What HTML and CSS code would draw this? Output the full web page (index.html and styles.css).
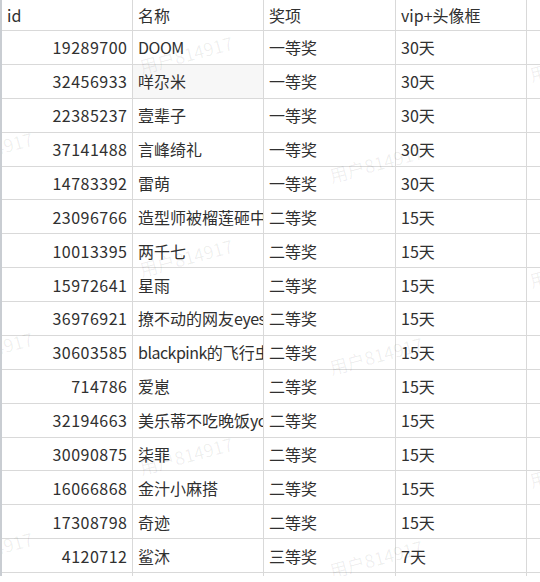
FILE: index.html
```html
<!DOCTYPE html>
<html lang="zh">
<head>
<meta charset="utf-8">
<title>sheet</title>
<link rel="stylesheet" href="styles.css">
</head>
<body>
<div class="sheet">
  <div class="row head">
    <div class="c l">id</div><div class="c l">名称</div><div class="c l">奖项</div><div class="c l">vip+头像框</div><div class="c"></div>
  </div>
  <div class="row"><div class="c r">19289700</div><div class="c l"><span class="lat">DOOM</span></div><div class="c l">一等奖</div><div class="c l">30天</div><div class="c"></div></div>
  <div class="row"><div class="c r">32456933</div><div class="c l sel">咩尕米</div><div class="c l">一等奖</div><div class="c l">30天</div><div class="c"></div></div>
  <div class="row"><div class="c r">22385237</div><div class="c l">壹辈子</div><div class="c l">一等奖</div><div class="c l">30天</div><div class="c"></div></div>
  <div class="row"><div class="c r">37141488</div><div class="c l">言峰绮礼</div><div class="c l">一等奖</div><div class="c l">30天</div><div class="c"></div></div>
  <div class="row"><div class="c r">14783392</div><div class="c l">雷萌</div><div class="c l">一等奖</div><div class="c l">30天</div><div class="c"></div></div>
  <div class="row"><div class="c r">23096766</div><div class="c l">造型师被榴莲砸中</div><div class="c l">二等奖</div><div class="c l">15天</div><div class="c"></div></div>
  <div class="row"><div class="c r">10013395</div><div class="c l">两千七</div><div class="c l">二等奖</div><div class="c l">15天</div><div class="c"></div></div>
  <div class="row"><div class="c r">15972641</div><div class="c l">星雨</div><div class="c l">二等奖</div><div class="c l">15天</div><div class="c"></div></div>
  <div class="row"><div class="c r">36976921</div><div class="c l">撩不动的网友<span class="lat">eyes</span></div><div class="c l">二等奖</div><div class="c l">15天</div><div class="c"></div></div>
  <div class="row"><div class="c r">30603585</div><div class="c l"><span class="lat">blackpink</span>的飞行虫</div><div class="c l">二等奖</div><div class="c l">15天</div><div class="c"></div></div>
  <div class="row"><div class="c r">714786</div><div class="c l">爱崽</div><div class="c l">二等奖</div><div class="c l">15天</div><div class="c"></div></div>
  <div class="row"><div class="c r">32194663</div><div class="c l">美乐蒂不吃晚饭<span class="lat">yo</span></div><div class="c l">二等奖</div><div class="c l">15天</div><div class="c"></div></div>
  <div class="row"><div class="c r">30090875</div><div class="c l">柒罪</div><div class="c l">二等奖</div><div class="c l">15天</div><div class="c"></div></div>
  <div class="row"><div class="c r">16066868</div><div class="c l">金汁小麻搭</div><div class="c l">二等奖</div><div class="c l">15天</div><div class="c"></div></div>
  <div class="row"><div class="c r">17308798</div><div class="c l">奇迹</div><div class="c l">二等奖</div><div class="c l">15天</div><div class="c"></div></div>
  <div class="row"><div class="c r">4120712</div><div class="c l">鲨沐</div><div class="c l">三等奖</div><div class="c l">7天</div><div class="c"></div></div>
  <div class="row"><div class="c r"></div><div class="c l"></div><div class="c l"></div><div class="c l"></div><div class="c"></div></div>

  <div class="wm-layer">
    <span class="wm a1">用户814917</span>
    <span class="wm a2">用户814917</span>
    <span class="wm a3">用户814917</span>
    <span class="wm b1">用户814917</span>
    <span class="wm b2">用户814917</span>
    <span class="wm b3">用户814917</span>
    <span class="wm l1">用户814917</span>
    <span class="wm l2">用户814917</span>
    <span class="wm l3">用户814917</span>
    <span class="wm r1">用户814917</span>
    <span class="wm r2">用户814917</span>
    <span class="wm r3">用户814917</span>
  </div>
</div>
</body>
</html>
```

FILE: styles.css
```css
html, body {
  margin: 0;
  padding: 0;
  background: #ffffff;
}

body {
  font-family: "Noto Sans CJK SC", "Noto Sans", sans-serif;
  font-size: 16px;
  color: #303030;
}

.sheet {
  position: relative;
  width: 540px;
  height: 576px;
  overflow: hidden;
  border-left: 2px solid #c9cdd2;
  box-sizing: border-box;
}

.row {
  display: grid;
  grid-template-columns: 131px 131px 132px 131px 1fr;
  height: 33.875px;
  box-sizing: border-box;
  border-bottom: 1px solid #d9d9d9;
}

.row.head {
  height: 31px;
}

.c {
  display: flex;
  align-items: center;
  border-right: 1px solid #d9d9d9;
  overflow: hidden;
  white-space: nowrap;
  line-height: 1;
  padding: 0 5px;
  min-width: 0;
}

.c:last-child {
  border-right: none;
}

.c.r {
  justify-content: flex-end;
  padding-right: 4.5px;
  letter-spacing: 0.5px;
}

.c.l {
  justify-content: flex-start;
}

.lat {
  letter-spacing: -0.5px;
}

.c.sel {
  background: #f7f7f7;
}

.wm-layer {
  position: absolute;
  inset: 0;
  pointer-events: none;
}

.wm {
  position: absolute;
  font-size: 18px;
  line-height: 1;
  white-space: nowrap;
  color: rgba(0, 0, 0, 0.065);
  transform: translate(-50%, -50%) rotate(-15deg);
}

.a1 { left: 184px; top: 54px; }
.a2 { left: 184px; top: 257px; }
.a3 { left: 184px; top: 455px; }
.b1 { left: 374px; top: 163px; }
.b2 { left: 374px; top: 355px; }
.b3 { left: 374px; top: 558px; }
.l1 { left: -16px; top: 150px; }
.l2 { left: -16px; top: 350px; }
.l3 { left: -16px; top: 550px; }
.r1 { left: 574px; top: 62px; }
.r2 { left: 574px; top: 268px; }
.r3 { left: 574px; top: 468px; }
```
